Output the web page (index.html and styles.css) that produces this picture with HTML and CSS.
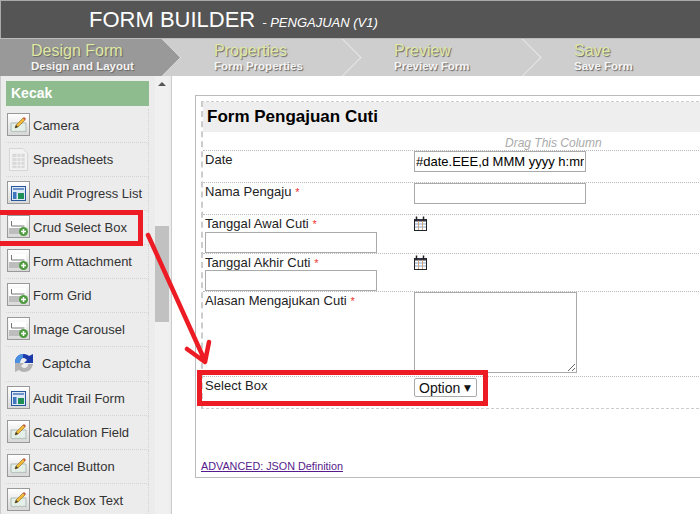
FILE: index.html
```html
<!DOCTYPE html>
<html lang="en">
<head>
    <meta charset="UTF-8">
    <meta name="viewport" content="width=device-width, initial-scale=1.0">
    <title>Form Builder</title>
    <link rel="stylesheet" href="styles.css">
</head>
<body>
    <svg class="defs" width="0" height="0">
        <symbol id="i-edit" viewBox="0 0 21 21">
            <path d="M3 8h15v9l-2-1-2 1-2-1-2 1-2-1-2 1-3-1z" fill="#e4efe9" stroke="#aebbb5" stroke-width="1"/>
            <path d="M7 13l1-3 7-7 2 2-7 7z" fill="#f0b93a" stroke="#8a6a20" stroke-width=".6"/>
            <path d="M15 3l1-1 2 2-1 1z" fill="#c94f3d"/>
            <path d="M7 13l1-3 2 2z" fill="#333"/>
        </symbol>
        <symbol id="i-layout" viewBox="0 0 21 21">
            <rect x="3.500" y="3.500" width="14" height="14" fill="#dfe8f5" stroke="#27569c"/>
            <rect x="5" y="5" width="11" height="2" fill="#6f94c9"/>
            <rect x="5" y="9" width="3.500" height="7" fill="#3f76bd"/>
            <rect x="10" y="10" width="6" height="6" fill="#1e8f57"/>
        </symbol>
        <symbol id="i-add" viewBox="0 0 21 21">
            <rect x="1" y="3" width="17" height="14" fill="#fff"/>
            <rect x="1" y="11" width="17" height="6" fill="#bdbdbd"/>
            <path d="M3.500 4v5h13" fill="none" stroke="#777"/>
            <circle cx="15.500" cy="14.500" r="4.500" fill="#4e9b3f"/>
            <path d="M15.500 12v5M13 14.500h5" stroke="#fff" stroke-width="1.500"/>
        </symbol>
        <symbol id="i-sheet" viewBox="0 0 21 24">
            <path d="M1 .5h14l5 5v18H1z" fill="#f2f2f2" stroke="#d4d4d4"/>
            <path d="M4 6h13v15H4z" fill="#d9d9d9"/>
            <path d="M4 10h13M4 14h13M4 18h13M9 6v15M13 6v15" stroke="#f2f2f2"/>
        </symbol>
        <symbol id="i-cal" viewBox="0 0 13 15">
            <rect x=".5" y="3.500" width="12" height="11" fill="#fff" stroke="#222"/>
            <rect x="1" y="3" width="11" height="2.500" fill="#334"/>
            <path d="M2.500 .5v4M9.500 .5v4" stroke="#222" stroke-width="1.500"/>
            <path d="M1 8h11M1 11h11" stroke="#8aa4c8"/>
            <path d="M4.500 5v9M8.500 5v9" stroke="#c9a98a"/>
        </symbol>
    </svg>

    <header class="top-bar">
        <span class="top-title">FORM BUILDER</span>
        <span class="top-sub">- PENGAJUAN (V1)</span>
    </header>

    <nav class="steps">
        <div class="step active"><b>Design Form</b><small>Design and Layout</small></div>
        <div class="step"><b>Properties</b><small>Form Properties</small></div>
        <div class="step"><b>Preview</b><small>Preview Form</small></div>
        <div class="step last"><b>Save</b><small>Save Form</small></div>
    </nav>

    <main class="builder">
        <aside class="sidebar">
            <div class="palette">
                <div class="palette-head">Kecak</div>
                <div class="tool"><span class="tool-icon"><svg><use href="#i-edit"/></svg></span>Camera</div>
                <div class="tool"><span class="tool-icon plain"><svg><use href="#i-sheet"/></svg></span>Spreadsheets</div>
                <div class="tool"><span class="tool-icon"><svg><use href="#i-layout"/></svg></span>Audit Progress List</div>
                <div class="tool"><span class="tool-icon"><svg><use href="#i-add"/></svg></span>Crud Select Box</div>
                <div class="tool"><span class="tool-icon"><svg><use href="#i-add"/></svg></span>Form Attachment</div>
                <div class="tool"><span class="tool-icon"><svg><use href="#i-add"/></svg></span>Form Grid</div>
                <div class="tool"><span class="tool-icon"><svg><use href="#i-add"/></svg></span>Image Carousel</div>
                <div class="tool captcha">
                    <span class="captcha-icon">
                        <svg viewBox="0 0 20 20" width="20" height="20">
                            <path d="M1 10C1 4 5 1 10 1c2 0 4 1 5 2l4-2v9h-9l3-3c-1-1-2-2-3-2-3 0-4 2-4 5z" fill="#1c3aa9"/>
                            <path d="M1 10C1 4 5 1 9 1v4C7 5 6 7 6 10z" fill="#4a90e2"/>
                            <path d="M1 10h9l-3 3c1 1 2 2 3 2 2 0 4-1 4-4h5c-1 5-4 8-9 8-2 0-4-1-5-2l-4 2z" fill="#b3b3b3"/>
                        </svg>
                    </span>Captcha
                </div>
                <div class="tool"><span class="tool-icon"><svg><use href="#i-layout"/></svg></span>Audit Trail Form</div>
                <div class="tool"><span class="tool-icon"><svg><use href="#i-edit"/></svg></span>Calculation Field</div>
                <div class="tool"><span class="tool-icon"><svg><use href="#i-edit"/></svg></span>Cancel Button</div>
                <div class="tool"><span class="tool-icon"><svg><use href="#i-edit"/></svg></span>Check Box Text</div>
            </div>
            <div class="scrollbar">
                <div class="scroll-up"></div>
                <div class="scroll-thumb"></div>
            </div>
        </aside>

        <section class="canvas">
            <div class="card">
                <div class="form-box">
                    <h2 class="form-title">Form Pengajuan Cuti</h2>
                    <div class="drag-hint">Drag This Column</div>
                    <div class="row">
                        <div class="label">Date</div>
                        <div><input class="field" type="text" value="#date.EEE,d MMM yyyy h:mm"></div>
                    </div>
                    <div class="row">
                        <div class="label">Nama Pengaju <i>*</i></div>
                        <div><input class="field" type="text"></div>
                    </div>
                    <div class="row tall">
                        <div>
                            <div class="label">Tanggal Awal Cuti <i>*</i></div>
                            <input class="field" type="text">
                        </div>
                        <div class="cal"><svg width="13" height="15"><use href="#i-cal"/></svg></div>
                    </div>
                    <div class="row tall">
                        <div>
                            <div class="label">Tanggal Akhir Cuti <i>*</i></div>
                            <input class="field" type="text">
                        </div>
                        <div class="cal"><svg width="13" height="15"><use href="#i-cal"/></svg></div>
                    </div>
                    <div class="row">
                        <div class="label">Alasan Mengajukan Cuti <i>*</i></div>
                        <div><textarea class="area"></textarea></div>
                    </div>
                    <div class="row">
                        <div class="label">Select Box</div>
                        <div><div class="select-box">Option<span class="caret">▼</span></div></div>
                    </div>
                </div>
                <a class="json-link" href="#">ADVANCED: JSON Definition</a>
            </div>
        </section>
    </main>

    <!-- red marks drawn over the screenshot -->
    <svg class="marks" width="700" height="514" viewBox="0 0 700 514">
        <rect x="-3" y="212.500" width="143.500" height="31" fill="none" stroke="#ed1c24" stroke-width="5"/>
        <rect x="199.500" y="372.500" width="286" height="31" fill="none" stroke="#ed1c24" stroke-width="5"/>
        <path d="M148 235L205 361M187 349L205 362L209 342" fill="none" stroke="#ed1c24" stroke-width="4.500" stroke-linecap="round" stroke-linejoin="round"/>
    </svg>
</body>
</html>
```

FILE: styles.css
```css
html, body {
    margin: 0;
    height: 514px;
    overflow: hidden;
}
body {
    font-family: "Liberation Sans", Arial, sans-serif;
    background-color: #fff;
    color: #222;
}
.defs {
    display: block;
    height: 0;
}
.top-bar {
    height: 37px;
    background-color: #555;
    border-top: 1px solid #aaa;
    border-left: 1px solid #aaa;
    padding-left: 88px;
    display: flex;
    align-items: baseline;
    color: #fff;
}
.top-title {
    font-size: 22px;
    line-height: 38px;
    margin-right: 7px;
}
.top-sub {
    font-size: 13px;
    font-style: italic;
}
.steps {
    display: flex;
    height: 38px;
    background-color: #cecece;
    overflow: hidden;
    border-top: 1px solid #bbb;
    box-sizing: border-box;
}
.step {
    width: 180px;
    flex-shrink: 0;
    padding-left: 34px;
    box-sizing: border-box;
    position: relative;
    display: flex;
    flex-direction: column;
    text-shadow: 1px 1px 1px #666;
}
.step.active {
    padding-left: 31px;
    background: linear-gradient(to right, #999 163px, transparent 163px);
}
.step::after {
    content: "";
    position: absolute;
    left: 149px;
    top: 5px;
    width: 26px;
    height: 26px;
    border-top: 1px solid #e8e8e8;
    border-right: 1px solid #e8e8e8;
    transform: rotate(45deg);
}
.step.active::after {
    background-color: #999;
}
.step.last::after {
    display: none;
}
.step b, .step small {
    position: relative;
    z-index: 1;
}
.step b {
    font-weight: normal;
    font-size: 16px;
    line-height: 18px;
    margin-top: 3px;
    color: #dfe8a4;
}
.step small {
    font-size: 11.500px;
    font-weight: bold;
    line-height: 13px;
    color: #f4f4f4;
}
.builder {
    display: flex;
    height: 438px;
}
.sidebar {
    width: 172px;
    flex-shrink: 0;
    box-sizing: border-box;
    display: flex;
    background-color: #ececec;
    border-left: 1px solid #ccc;
    border-right: 1px solid #ccc;
    overflow: hidden;
}
.palette {
    width: 143px;
    margin-left: 5px;
    padding-top: 5px;
    flex-shrink: 0;
}
.palette-head {
    height: 25px;
    line-height: 25px;
    padding-left: 5px;
    margin-bottom: 3px;
    background-color: #8fbc8f;
    color: #fff;
    font-size: 14px;
    font-weight: bold;
}
.tool {
    height: 34px;
    box-sizing: border-box;
    display: flex;
    align-items: center;
    gap: 3px;
    border-bottom: 1px dotted #d4d4d4;
    border-right: 1px dotted #d4d4d4;
    font-size: 13px;
    color: #333;
}
.tool-icon {
    width: 21px;
    height: 21px;
    margin: 0 0 3px 1px;
    flex-shrink: 0;
    border: 1px solid #999;
    background: linear-gradient(#fff, #d8d8d8);
}
.tool-icon.plain {
    border-color: transparent;
    background: none;
}
.tool-icon svg {
    display: block;
    width: 21px;
    height: 23px;
}
.tool.captcha {
    height: 35px;
    gap: 8px;
    padding-bottom: 2px;
}
.captcha-icon {
    margin-left: 8px;
    height: 20px;
}
.scrollbar {
    width: 14px;
    margin-left: 6px;
    background-color: #f0f0f0;
}
.scroll-up {
    width: 0;
    margin: 6px auto 0;
    border-left: 4px solid transparent;
    border-right: 4px solid transparent;
    border-bottom: 4px solid #555;
}
.scroll-thumb {
    height: 96px;
    margin-top: 140px;
    background-color: #c1c1c1;
}
.canvas {
    flex: 1;
    min-width: 0;
    padding: 19px 0 0 23px;
    overflow: hidden;
}
.card {
    width: 560px;
    height: 383px;
    box-sizing: border-box;
    border: 1px solid #bbb;
    padding: 5px;
    display: flex;
    flex-direction: column;
    justify-content: space-between;
}
.form-box {
    border-top: 1px dashed #ccc;
    border-bottom: 1px dashed #ccc;
    border-left: 2px dashed #ccc;
}
.form-title {
    margin: 0;
    height: 30px;
    line-height: 29px;
    padding-left: 4px;
    background-color: #eee;
    font-size: 17px;
    color: #000;
}
.drag-hint {
    height: 18px;
    line-height: 22px;
    padding-left: 302px;
    font-size: 12px;
    font-style: italic;
    color: #aaa;
}
.row {
    display: grid;
    grid-template-columns: 209px 1fr;
    padding-left: 2px;
    border-top: 1px dotted #bbb;
    min-height: 31px;
}
.row.tall {
    min-height: 37px;
}
.label {
    font-size: 13px;
    letter-spacing: .04px;
    line-height: 16px;
    padding-top: 1px;
    color: #222;
}
.tall .label {
    line-height: 15px;
}
.tall + .tall .label {
    margin-bottom: -1px;
}
.label i {
    color: #e33;
    font-style: normal;
    font-size: 11px;
}
.field {
    display: block;
    width: 172px;
    height: 21px;
    box-sizing: border-box;
    border: 1px solid #aaa;
    padding: 0 1px;
    margin: 0;
    font-family: "Liberation Sans", Arial, sans-serif;
    font-size: 13px;
    color: #000;
    background-color: #fff;
    outline: none;
}
.cal {
    padding-top: 1px;
}
.cal svg {
    display: block;
}
.area {
    display: block;
    width: 163px;
    height: 81px;
    box-sizing: border-box;
    border: 1px solid #aaa;
    margin: 0 0 3px;
    padding: 2px;
}
.select-box {
    width: 63px;
    height: 19px;
    box-sizing: border-box;
    border: 1px solid #aaa;
    border-radius: 2px;
    margin-top: 1px;
    padding-left: 4px;
    display: flex;
    justify-content: space-between;
    align-items: center;
    font-size: 14px;
    color: #111;
}
.caret {
    font-family: "DejaVu Sans", sans-serif;
    font-size: 9px;
    margin-right: 5px;
}
.json-link {
    font-size: 10.800px;
    color: #551a8b;
}
.marks {
    position: absolute;
    left: 0;
    top: 0;
    pointer-events: none;
}
```
